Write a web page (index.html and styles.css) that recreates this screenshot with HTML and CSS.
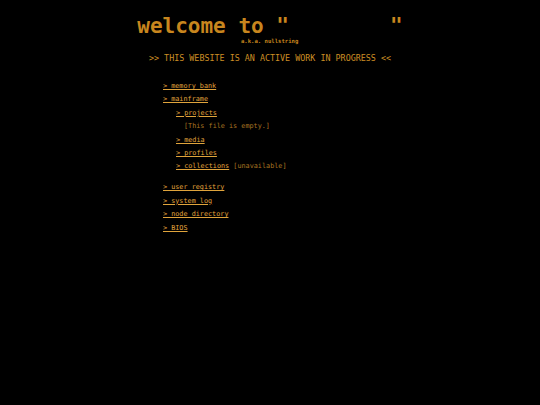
FILE: index.html
```html
<!DOCTYPE html>
<html>
<head>
<meta charset="utf-8">
<link rel="stylesheet" href="styles.css">
</head>
<body>
<div class="page">
  <header class="head">
    <h1 class="title">welcome to "<span class="hidden">nullstri</span>"</h1>
    <div class="aka">a.k.a. nullstring</div>
  </header>
  <p class="notice">&gt;&gt; THIS WEBSITE IS AN ACTIVE WORK IN PROGRESS &lt;&lt;</p>
  <ul class="menu">
    <li><a href="#">&gt; memory bank</a></li>
    <li><a href="#">&gt; mainframe</a>
      <ul class="sub">
        <li><a href="#">&gt; projects</a>
          <div class="note">[This file is empty.]</div>
        </li>
        <li><a href="#">&gt; media</a></li>
        <li><a href="#">&gt; profiles</a></li>
        <li><a href="#">&gt; collections</a> <span class="note-inline">[unavailable]</span></li>
      </ul>
    </li>
  </ul>
  <ul class="menu second">
    <li><a href="#">&gt; user registry</a></li>
    <li><a href="#">&gt; system log</a></li>
    <li><a href="#">&gt; node directory</a></li>
    <li><a href="#">&gt; BIOS</a></li>
  </ul>
</div>
</body>
</html>
```
FILE: styles.css
```css
html, body {
  margin: 0;
  padding: 0;
  background: #000;
}
body {
  font-family: "DejaVu Sans Mono", "Liberation Mono", monospace;
  color: #c8861e;
  width: 540px;
  height: 405px;
}
.page {
  width: 266px;
  margin: 0 auto;
  padding-top: 14px;
}
.head {
  display: flex;
  flex-direction: column;
}
.title {
  margin: 0;
  font-size: 21px;
  line-height: 25px;
  font-weight: bold;
  color: #c8861e;
  white-space: pre;
  text-align: center;
}
.hidden {
  color: #000;
}
.aka {
  font-size: 5.6px;
  line-height: 6px;
  font-weight: bold;
  margin-left: 104px;
  margin-top: -1px;
  color: #c8861e;
}
.notice {
  margin: 8px -20px 0;
  font-size: 8.4px;
  line-height: 12px;
  text-align: center;
  color: #cc8e24;
}
.menu {
  list-style: none;
  margin: 16px 0 0 26px;
  padding: 0;
  font-size: 6.8px;
  line-height: 13.4px;
}
.menu.second {
  margin-top: 7.5px;
}
.menu a {
  color: #e0a43c;
  text-decoration: underline;
}
.sub {
  list-style: none;
  margin: 0;
  padding: 0 0 0 13px;
}
.note {
  padding-left: 8px;
  color: #a87420;
}
.note-inline {
  color: #a87420;
}
```
